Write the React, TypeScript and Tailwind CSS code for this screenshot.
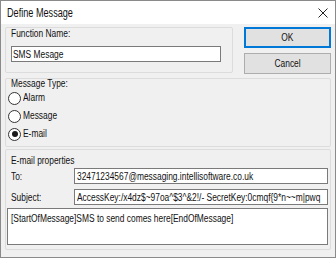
import React from "react";

function T({ children, center }: { children: React.ReactNode; center?: boolean }) {
  return (
    <span
      className={
        center
          ? "inline-block whitespace-nowrap origin-center scale-x-[0.84]"
          : "inline-block whitespace-nowrap origin-left scale-x-[0.84]"
      }
    >
      {children}
    </span>
  );
}

function Radio({ label, checked }: { label: string; checked?: boolean }) {
  return (
    <div className="flex items-center h-[18px] gap-[2px]">
      <span className="w-[13px] h-[13px] shrink-0 rounded-full border border-[#333333] bg-white flex items-center justify-center">
        {checked && <span className="w-[6px] h-[6px] rounded-full bg-[#1a1a1a]" />}
      </span>
      <span className="leading-none">
        <T>{label}</T>
      </span>
    </div>
  );
}

const SUBJECT = "AccessKey:/x4dz$~97oa^$3^&2!/- SecretKey:0cmqf{9*n~~m|pwq";

export default function App() {
  return (
    <div className="w-[336px] h-[258px] bg-[#f0f0f0] border border-[#8a8a8a] flex flex-col font-['Liberation_Sans',Arial,sans-serif] text-[10px] text-[#111] overflow-hidden">
      <div className="h-[23px] bg-white flex items-center justify-between pl-[6px] pr-[7px] shrink-0">
        <span className="text-[12px] inline-block whitespace-nowrap origin-left scale-x-[0.76]">Define Message</span>
        <svg width="10" height="10" viewBox="0 0 10 10">
          <path d="M0.5 0.5 L9.5 9.5 M9.5 0.5 L0.5 9.5" stroke="#222" strokeWidth="1" />
        </svg>
      </div>
      <div className="flex flex-col px-[4px] pt-[3px]">
        <div className="flex gap-[11px]">
          <div className="w-[228px] h-[46px] border border-[#dcdcdc] rounded-[2px] pl-[5px] flex flex-col">
            <span className="leading-[11px]">
              <T>Function Name:</T>
            </span>
            <div className="mt-[7px] w-[210px] h-[16px] bg-white border border-[#7a7a7a] px-[1px] flex items-center overflow-hidden">
              <T>SMS Mesage</T>
            </div>
          </div>
          <div className="flex flex-col gap-[5px] w-[87px]">
            <button className="h-[21px] border-2 border-[#0078d7] bg-[#e1e1e1] leading-none">
              <T center>OK</T>
            </button>
            <button className="h-[21px] border border-[#adadad] bg-[#e1e1e1] leading-none">
              <T center>Cancel</T>
            </button>
          </div>
        </div>
        <div className="mt-[4px] h-[69px] w-[326px] border border-[#dcdcdc] rounded-[2px] pl-[2px] flex flex-col">
          <span className="leading-[10px] pl-[3px]">
            <T>Message Type:</T>
          </span>
          <div className="flex flex-col">
            <Radio label="Alarm" />
            <Radio label="Message" />
            <Radio label="E-mail" checked />
          </div>
        </div>
        <div className="mt-[2px] h-[101px] w-[326px] border border-[#dcdcdc] rounded-[2px] pl-[5px] pr-[2px] pt-[4px] flex flex-col">
          <span className="leading-[13px]">
            <T>E-mail properties</T>
          </span>
          <div className="mt-[1px] flex items-center">
            <span className="w-[63px] shrink-0">
              <T>To:</T>
            </span>
            <div className="flex-1 h-[16px] bg-white border border-[#7a7a7a] px-[2px] flex items-center overflow-hidden">
              <T>32471234567@messaging.intellisoftware.co.uk</T>
            </div>
          </div>
          <div className="mt-[5px] flex items-center">
            <span className="w-[63px] shrink-0">
              <T>Subject:</T>
            </span>
            <div className="flex-1 h-[16px] bg-white border border-[#7a7a7a] px-[2px] flex items-center overflow-hidden">
              <T>{SUBJECT}</T>
            </div>
          </div>
          <div className="mt-[3px] -ml-[4px] h-[37px] bg-white border border-[#7a7a7a] px-[3px] pt-[2px] overflow-hidden">
            <T>[StartOfMessage]SMS to send comes here[EndOfMessage]</T>
          </div>
        </div>
      </div>
    </div>
  );
}
